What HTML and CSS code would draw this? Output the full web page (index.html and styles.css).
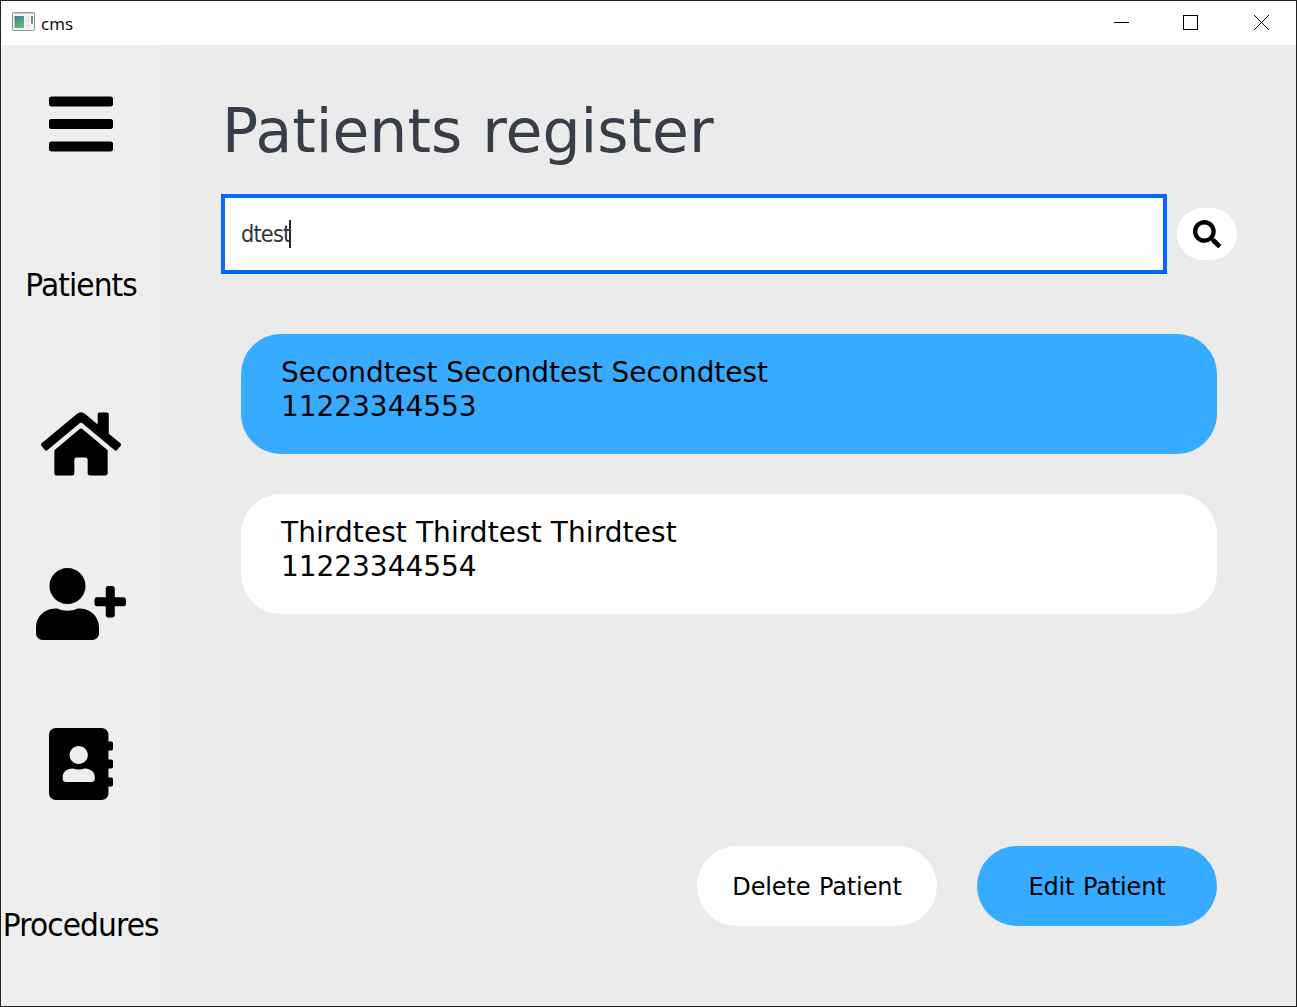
FILE: index.html
```html
<!DOCTYPE html>
<html lang="en">
<head>
<meta charset="utf-8">
<title>cms</title>
<link rel="stylesheet" href="styles.css">
</head>
<body>
<div class="window">
  <header class="titlebar">
    <svg class="app-icon" width="23" height="19" viewBox="0 0 23 19">
      <defs><linearGradient id="pane" x1="0" y1="0" x2="0.4" y2="1"><stop offset="0" stop-color="#4579a8"/><stop offset="1" stop-color="#62b877"/></linearGradient></defs>
      <rect x=".5" y=".5" width="22" height="18" rx="1" fill="#f5f5f5" stroke="#92979b"/>
      <path d="M1 1.5h21" stroke="#c3c9ce"/>
      <rect x="2.500" y="4" width="9.500" height="12" fill="url(#pane)"/>
      <rect x="14" y="4" width="4" height="7" fill="#e6e6e6"/>
      <rect x="14" y="12" width="4" height="4" fill="#e6e6e6"/>
      <rect x="19" y="4" width="2" height="8" fill="url(#pane)"/>
    </svg>
    <span class="app-name">cms</span>
    <svg class="controls" width="156" height="16" viewBox="0 0 156 16" fill="none" stroke="#000">
      <path d="M0 8.500h15"/>
      <rect x="69.500" y="1.500" width="14" height="14"/>
      <path d="M140 1l15 15M155 1l-15 15"/>
    </svg>
  </header>
  <div class="body">
    <nav class="sidebar">
      <a class="item"><svg width="64" height="72" viewBox="0 0 448 512" preserveAspectRatio="none"><path d="M16 132h416c8.837 0 16-7.163 16-16V76c0-8.837-7.163-16-16-16H16C7.163 60 0 67.163 0 76v40c0 8.837 7.163 16 16 16zm0 160h416c8.837 0 16-7.163 16-16v-40c0-8.837-7.163-16-16-16H16c-8.837 0-16 7.163-16 16v40c0 8.837 7.163 16 16 16zm0 160h416c8.837 0 16-7.163 16-16v-40c0-8.837-7.163-16-16-16H16c-8.837 0-16 7.163-16 16v40c0 8.837 7.163 16 16 16z"/></svg></a>
      <a class="item"><span class="label">Patients</span></a>
      <a class="item"><svg width="80" height="72" viewBox="0 0 576 512" preserveAspectRatio="none"><path d="M280.370 148.260L96 300.110V464a16 16 0 0 0 16 16l112.060-.29a16 16 0 0 0 15.920-16V368a16 16 0 0 1 16-16h64a16 16 0 0 1 16 16v95.640a16 16 0 0 0 16 16.050L464 480a16 16 0 0 0 16-16V300L295.670 148.260a12.190 12.190 0 0 0-15.300 0zM571.600 251.470L488 182.560V44.050a12 12 0 0 0-12-12h-56a12 12 0 0 0-12 12v72.610L318.470 43a48 48 0 0 0-61 0L4.340 251.470a12 12 0 0 0-1.600 16.900l25.500 31A12 12 0 0 0 45.150 301l235.220-193.740a12.190 12.190 0 0 1 15.300 0L530.900 301a12 12 0 0 0 16.900-1.600l25.500-31a12 12 0 0 0-1.700-16.930z"/></svg></a>
      <a class="item"><svg width="90" height="72" viewBox="0 0 640 512"><path d="M624 208h-64v-64c0-8.800-7.200-16-16-16h-32c-8.800 0-16 7.200-16 16v64h-64c-8.800 0-16 7.200-16 16v32c0 8.800 7.200 16 16 16h64v64c0 8.800 7.200 16 16 16h32c8.800 0 16-7.200 16-16v-64h64c8.800 0 16-7.200 16-16v-32c0-8.800-7.200-16-16-16zm-400 48c70.700 0 128-57.300 128-128S294.700 0 224 0 96 57.300 96 128s57.300 128 128 128zm89.600 32h-16.700c-22.200 10.200-46.900 16-72.900 16s-50.600-5.800-72.900-16h-16.700C60.200 288 0 348.200 0 422.400V464c0 26.500 21.500 48 48 48h352c26.500 0 48-21.500 48-48v-41.600c0-74.200-60.200-134.400-134.400-134.400z"/></svg></a>
      <a class="item"><svg width="64" height="72" viewBox="0 0 448 512" preserveAspectRatio="none"><path d="M436 160c6.600 0 12-5.400 12-12v-40c0-6.600-5.400-12-12-12h-20V48c0-26.500-21.500-48-48-48H48C21.500 0 0 21.500 0 48v416c0 26.500 21.500 48 48 48h320c26.500 0 48-21.500 48-48v-48h20c6.600 0 12-5.400 12-12v-40c0-6.600-5.400-12-12-12h-20v-64h20c6.600 0 12-5.400 12-12v-40c0-6.600-5.400-12-12-12h-20v-64h20zm-228-32c35.300 0 64 28.700 64 64s-28.700 64-64 64-64-28.700-64-64 28.700-64 64-64zm112 236.800c0 10.600-10 19.200-22.400 19.200H118.400C106 384 96 375.400 96 364.800v-19.200c0-31.800 30.100-57.600 67.200-57.600h5c12.300 5.100 25.700 8 39.800 8s27.600-2.900 39.800-8h5c37.100 0 67.200 25.800 67.200 57.600v19.200z"/></svg></a>
      <a class="item"><span class="label">Procedures</span></a>
    </nav>
    <main class="content">
      <h1 class="heading">Patients register</h1>
      <div class="search">
        <div class="field"><span class="query">dtest</span><span class="caret"></span></div>
        <button class="search-button" aria-label="Search"><svg width="28" height="28" viewBox="0 0 512 512"><path d="M505 442.700L405.300 343c-4.500-4.500-10.600-7-17-7H372c27.600-35.300 44-79.700 44-128C416 93.100 322.900 0 208 0S0 93.100 0 208s93.100 208 208 208c48.300 0 92.700-16.400 128-44v16.300c0 6.400 2.500 12.500 7 17l99.700 99.700c9.400 9.400 24.600 9.400 33.900 0l28.300-28.300c9.400-9.400 9.400-24.600.1-34zM208 336c-70.700 0-128-57.200-128-128 0-70.700 57.200-128 128-128 70.700 0 128 57.200 128 128 0 70.700-57.200 128-128 128z"/></svg></button>
      </div>
      <div class="list">
        <div class="card selected"><div>Secondtest Secondtest Secondtest</div><div>11223344553</div></div>
        <div class="card"><div class="wide">Thirdtest Thirdtest Thirdtest</div><div>11223344554</div></div>
      </div>
      <div class="actions">
        <button class="action">Delete Patient</button>
        <button class="action primary">Edit Patient</button>
      </div>
    </main>
  </div>
</div>
</body>
</html>
```
FILE: styles.css
```css
* { box-sizing: border-box; }

body {
  margin: 0;
  font-family: "DejaVu Sans", sans-serif;
  color: #000;
}

button {
  border: 0;
  padding: 0;
  font: inherit;
  color: inherit;
}

.window {
  display: flex;
  flex-direction: column;
  width: 1297px;
  height: 1007px;
  border: 1px solid #242124;
  background: #ebebeb;
  overflow: hidden;
}

.titlebar {
  display: flex;
  flex: none;
  align-items: flex-start;
  height: 44px;
  padding: 11px 26px 0 11px;
  background: #fff;
}

.app-name {
  margin: 0 auto 0 6px;
  font: 17px/24px "Open Sans", sans-serif;
}

.controls { margin-top: 2px; }

.body {
  display: flex;
  flex: 1;
  min-height: 0;
}

.sidebar {
  flex: none;
  width: 160px;
  background: #eee;
}

.item {
  display: flex;
  align-items: center;
  justify-content: center;
  height: 160px;
  padding-bottom: 2px;
}

.item svg { flex: none; }

.label {
  padding-top: 2px;
  font-size: 32px;
  letter-spacing: -1px;
  white-space: nowrap;
  transform: scaleX(.93);
}

.content {
  display: flex;
  flex: 1;
  flex-direction: column;
  padding: 46px 59px 80px 60px;
}

.heading {
  margin: 0 0 23px;
  padding-left: 1px;
  font-size: 60px;
  font-weight: 400;
  line-height: 80px;
  letter-spacing: 0;
  word-spacing: 1px;
  color: #373e48;
}

.search {
  display: flex;
  align-items: center;
  gap: 10px;
}

.field {
  display: flex;
  flex: 1;
  align-items: center;
  height: 80px;
  padding-left: 16px;
  border: 4px solid #0468ff;
  background: #fff;
}

.query {
  width: 48px;
  font-size: 23px;
  letter-spacing: -.9px;
  white-space: nowrap;
  color: #333639;
  transform: scaleX(.91);
  transform-origin: left;
}

.caret {
  width: 2px;
  height: 28px;
  background: #26282a;
}

.search-button {
  display: flex;
  align-items: center;
  justify-content: center;
  width: 60px;
  height: 52px;
  border-radius: 28px;
  background: #fff;
}

.list {
  display: flex;
  flex-direction: column;
  gap: 40px;
  padding: 60px 20px 0;
}

.card {
  height: 120px;
  padding: 22px 40px;
  border-radius: 40px;
  background: #fff;
  font-size: 28px;
  line-height: 34px;
  letter-spacing: -.04px;
}

.wide { letter-spacing: .08px; }

.card.selected,
.action.primary { background: #37abff; }

.actions {
  display: flex;
  justify-content: flex-end;
  gap: 40px;
  margin-top: auto;
  padding-right: 20px;
}

.action {
  width: 240px;
  height: 80px;
  padding-top: 2px;
  border-radius: 40px;
  background: #fff;
  font-size: 24px;
  letter-spacing: -.12px;
  word-spacing: 1px;
}
```
